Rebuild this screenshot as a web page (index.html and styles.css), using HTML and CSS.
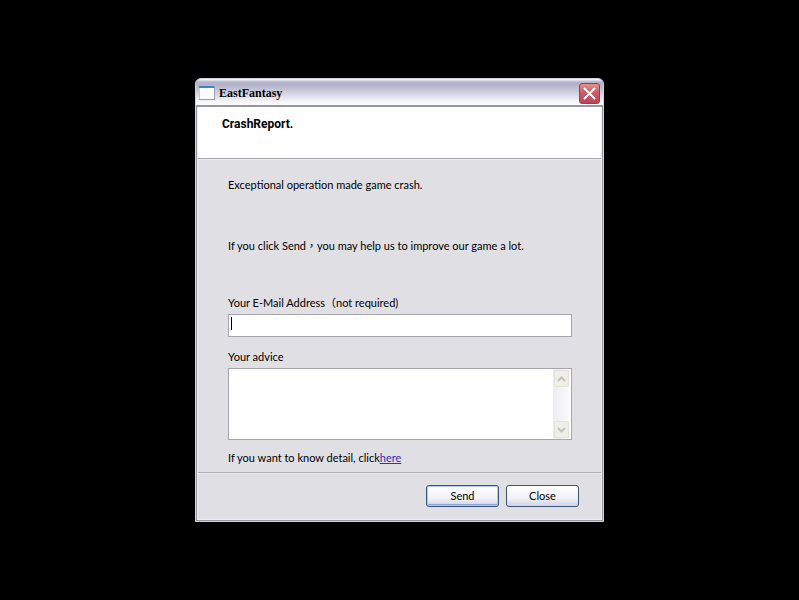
FILE: index.html
```html
<!DOCTYPE html>
<html lang="en">
<head>
    <meta charset="UTF-8">
    <meta name="viewport" content="width=device-width, initial-scale=1.0">
    <title>EastFantasy</title>
    <link rel="stylesheet" href="styles.css">
</head>
<body>

<form class="window" onsubmit="return false">
    <div class="title-bar">
        <svg class="app-icon" width="16" height="14" viewBox="0 0 16 14" aria-hidden="true">
            <rect x="0" y="0" width="16" height="14" fill="#8fa0b8"/>
            <rect x="0" y="0" width="15" height="13" fill="#fbfdff"/>
            <rect x="0" y="0" width="15" height="2" fill="#3d86c0"/>
            <rect x="0" y="2" width="1" height="11" fill="#b9d3e6"/>
        </svg>
        <span class="title">EastFantasy</span>
        <button type="button" class="close-btn" aria-label="Close window">
            <svg width="13" height="13" viewBox="0 0 13 13" aria-hidden="true">
                <path d="M1 1L12 12M12 1L1 12" stroke="#fff" stroke-width="2" fill="none"/>
            </svg>
        </button>
    </div>

    <div class="client">
        <div class="header">
            <h1>CrashReport.</h1>
        </div>

        <div class="content">
            <p class="message">Exceptional operation made game crash.</p>
            <p class="message">If you click Send<span class="cjk">，</span>you may help us to improve our game a lot.</p>

            <label for="email">Your E-Mail Address<span class="cjk">（</span>not required)</label>
            <input type="text" id="email" class="email">

            <label for="advice">Your advice</label>
            <div class="advice-box">
                <textarea id="advice" class="advice"></textarea>
                <div class="scrollbar">
                    <button type="button" class="scroll-btn" aria-label="Scroll up">
                        <svg width="9" height="6" viewBox="0 0 9 6" aria-hidden="true">
                            <path d="M1 5L4.500 1.500L8 5" stroke="#c3c5b8" stroke-width="2" fill="none"/>
                        </svg>
                    </button>
                    <button type="button" class="scroll-btn" aria-label="Scroll down">
                        <svg width="9" height="6" viewBox="0 0 9 6" aria-hidden="true">
                            <path d="M1 1L4.500 4.500L8 1" stroke="#c3c5b8" stroke-width="2" fill="none"/>
                        </svg>
                    </button>
                </div>
            </div>

            <p class="detail">If you want to know detail, click<a href="#">here</a></p>
        </div>

        <div class="footer">
            <button type="submit" class="btn btn-default">Send</button>
            <button type="button" class="btn">Close</button>
        </div>
    </div>
</form>

</body>
</html>
```

FILE: styles.css
```css
* {
    box-sizing: border-box;
}

body {
    margin: 0;
    min-height: 100vh;
    display: flex;
    justify-content: center;
    align-items: center;
    background-color: #000;
    color: #000;
    font-family: Lato, "Noto Sans CJK TC", sans-serif;
    font-size: 11px;
    line-height: 14px;
}

/* Window frame */
.window {
    width: 100%;
    max-width: 409px;
    border: 1px solid #d4d4dc;
    border-radius: 6px 6px 0 0;
    background-color: #96969f;
    overflow: hidden;
}

.title-bar {
    display: flex;
    align-items: center;
    gap: 4px;
    height: 26px;
    padding: 2px 3px 0;
    background: linear-gradient(#fff 0, #b4b4cc 3px, #b2b2ca 6px, #e2e2ec 18px, #fafafc 24px);
}

.title {
    flex: 1;
    color: #000;
    font-family: "Liberation Serif", serif;
    font-size: 12px;
    font-weight: bold;
}

.close-btn {
    display: flex;
    align-items: center;
    justify-content: center;
    width: 21px;
    height: 21px;
    padding: 0;
    border: 1px solid #9c3c48;
    border-radius: 3px;
    background: linear-gradient(#e0958c, #cc5c66 45%, #b94655);
}

.client {
    margin: 2px 1px 1px;
    border: 1px solid #eeeef2;
    border-top: 0;
    background-color: #e0dfe4;
}

/* White strip on top */
.header {
    height: 52px;
    padding: 10px 24px;
    border-bottom: 1px solid #a8a8ae;
    background-color: #fff;
}

.header h1 {
    margin: 0;
    color: #000;
    font-family: Roboto, sans-serif;
    font-size: 12px;
    line-height: 14px;
}

.content {
    display: flex;
    flex-direction: column;
    padding: 18px 29px 7px 30px;
    border-top: 1px solid #ededf1;
    border-bottom: 1px solid #aeaeb4;
}

.message {
    margin: 0 0 47px;
}

.message + .message {
    margin-bottom: 43px;
}

.cjk {
    font-family: "Noto Sans CJK TC", sans-serif;
    line-height: 1;
}

label {
    margin-bottom: 4px;
}

.email {
    width: 100%;
    height: 23px;
    margin-bottom: 13px;
    padding: 2px 4px;
    border: 1px solid #a5a5ae;
    /* text cursor */
    background: linear-gradient(#000, #000) 2px 2px / 1px 13px no-repeat #fff;
    font: inherit;
    outline: none;
}

.advice-box {
    display: flex;
    height: 72px;
    margin-bottom: 11px;
    border: 1px solid #a5a5ae;
    background-color: #fff;
}

.advice {
    flex: 1;
    padding: 2px 4px;
    border: 0;
    background-color: #fff;
    font: inherit;
    outline: none;
    resize: none;
}

.scrollbar {
    display: flex;
    flex-direction: column;
    justify-content: space-between;
    width: 17px;
    margin-right: 1px;
    padding: 1px;
    background: linear-gradient(to right, #ececf2, #fbfbfe);
}

.scroll-btn {
    display: flex;
    align-items: center;
    justify-content: center;
    height: 17px;
    padding: 0;
    border: 1px solid #e2e2d8;
    border-radius: 2px;
    background-color: #efefe8;
}

.detail {
    margin: 0;
}

.detail a {
    color: #3030b8;
}

/* Buttons */
.footer {
    display: flex;
    justify-content: flex-end;
    gap: 7px;
    padding: 11px 22px 12px;
    border-top: 1px solid #ededf1;
}

.btn {
    width: 73px;
    height: 22px;
    padding: 0;
    border: 1px solid #3a5478;
    border-radius: 3px;
    background: linear-gradient(#fff, #f2f2f8 60%, #d2d2e2);
    color: #000;
    font: inherit;
}

.btn-default {
    box-shadow: inset 0 0 0 1px #b4c8ee, inset 0 -2px 0 #8ca4de;
}
```
